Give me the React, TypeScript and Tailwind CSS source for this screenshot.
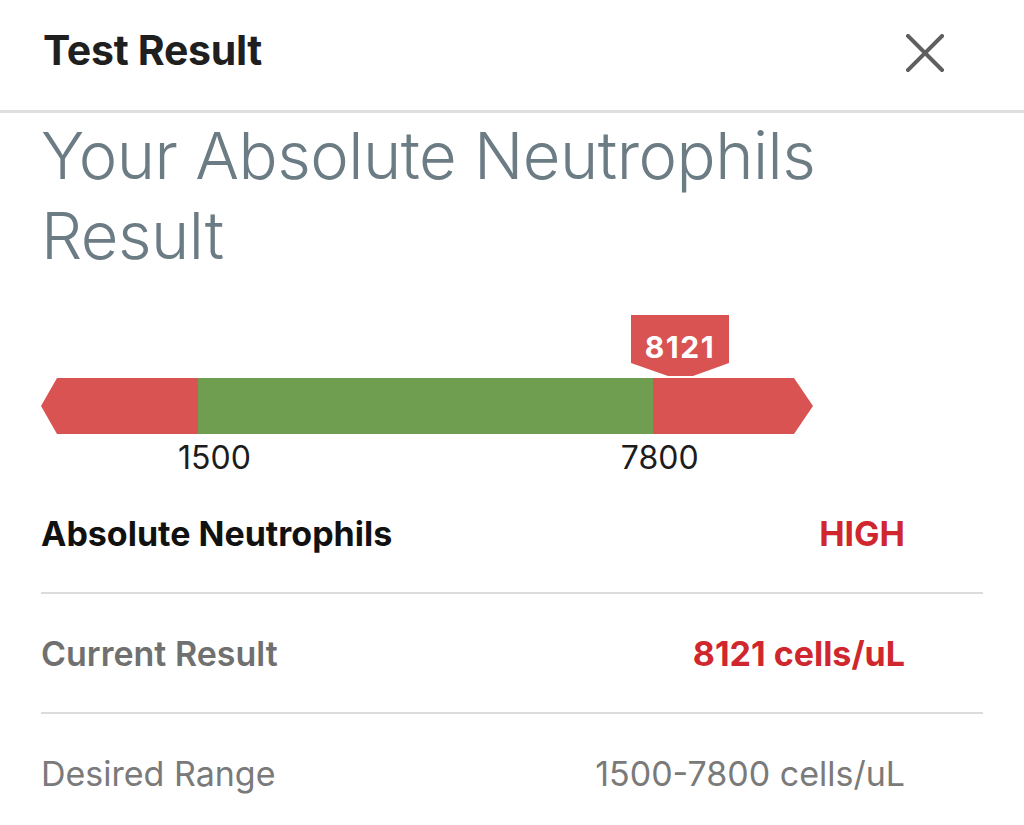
const App = () => {
  return (
    <div className="w-[1024px] h-[825px] overflow-hidden bg-white font-['Inter','Liberation_Sans',sans-serif]">
      <header className="h-[113px] flex items-center justify-between pl-[43px] pr-[80px] border-b-[3px] border-[#dedede]">
        <h1 className="text-[41px] font-bold text-[#1f1f1f] tracking-[-0.3px] -mt-[8px]">Test Result</h1>
        <button className="w-[38px] h-[38px] -mt-[4px] text-[#5f5f5f]">
          <svg viewBox="0 0 38 38" className="w-full h-full">
            <path d="M2 2 L36 36 M36 2 L2 36" stroke="currentColor" strokeWidth="4" strokeLinecap="square" fill="none" />
          </svg>
        </button>
      </header>

      <main className="px-[41px]">
        <h2 className="mt-[3px] text-[65px] leading-[80px] font-light text-[#6c7c84] tracking-[-0.5px]">
          Your Absolute Neutrophils Result
        </h2>

        <div className="relative mt-[39px] pt-[63px] w-[772px]">
          <div className="absolute top-0 left-[590px] w-[98px] h-[61px] bg-[#d95353] flex justify-center pt-[14px] [clip-path:polygon(0_0,98px_0,98px_48px,62px_61px,37px_61px,0_48px)]">
            <span className="text-white text-[30px] leading-[36px] font-bold tracking-[1.5px]">8121</span>
          </div>
          <div className="flex h-[56px] [clip-path:polygon(16px_0,753px_0,772px_28px,753px_56px,16px_56px,0_28px)]">
            <div className="w-[157px] bg-[#d95353]" />
            <div className="w-[455px] bg-[#6f9e51]" />
            <div className="flex-1 bg-[#d95353]" />
          </div>
          <div className="flex h-[40px] pt-[8px] text-[32px] leading-[32px] text-[#1c1c1c]">
            <span className="ml-[137px]">1500</span>
            <span className="ml-[370px]">7800</span>
          </div>
        </div>

        <div>
          {[
            { label: "Absolute Neutrophils", value: "HIGH", l: "text-[#111] font-bold", v: "text-[#d0262d] font-bold" },
            { label: "Current Result", value: "8121 cells/uL", l: "text-[#707070] font-semibold", v: "text-[#d0262d] font-bold" },
            { label: "Desired Range", value: "1500-7800 cells/uL", l: "text-[#7a7a7a] font-normal", v: "text-[#7a7a7a] font-normal" },
          ].map((row, i) => (
            <div
              key={i}
              className="h-[120px] flex items-center justify-between pr-[78px] border-b-2 border-[#dcdcdc] text-[34px]"
            >
              <span className={row.l}>{row.label}</span>
              <span className={row.v}>{row.value}</span>
            </div>
          ))}
        </div>
      </main>
    </div>
  );
};

export default App;
